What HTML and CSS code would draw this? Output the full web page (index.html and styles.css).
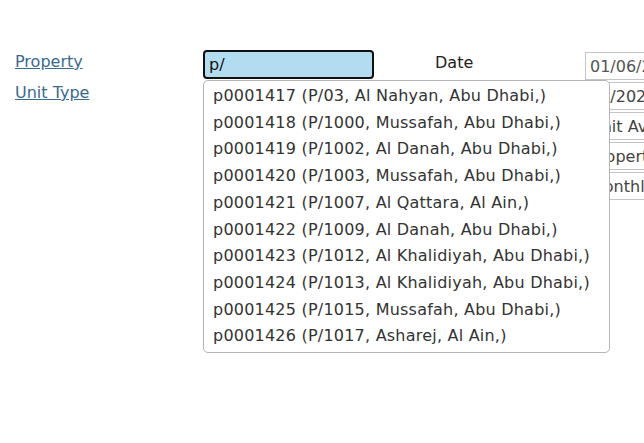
FILE: index.html
```html
<!DOCTYPE html>
<html lang="en">
<head>
  <meta charset="UTF-8">
  <meta name="viewport" content="width=device-width, initial-scale=1.0">
  <title>Property Search</title>
  <link rel="stylesheet" href="styles.css">
</head>
<body>
  <div class="page">
    <div class="form">
      <div class="labels">
        <a href="#" class="label-link">Property</a>
        <a href="#" class="label-link">Unit Type</a>
      </div>
      <div class="search">
        <input type="text" class="search-input" value="p/">
        <ul class="suggest">
          <li>p0001417 (P/03, Al Nahyan, Abu Dhabi,)</li>
          <li>p0001418 (P/1000, Mussafah, Abu Dhabi,)</li>
          <li>p0001419 (P/1002, Al Danah, Abu Dhabi,)</li>
          <li>p0001420 (P/1003, Mussafah, Abu Dhabi,)</li>
          <li>p0001421 (P/1007, Al Qattara, Al Ain,)</li>
          <li>p0001422 (P/1009, Al Danah, Abu Dhabi,)</li>
          <li>p0001423 (P/1012, Al Khalidiyah, Abu Dhabi,)</li>
          <li>p0001424 (P/1013, Al Khalidiyah, Abu Dhabi,)</li>
          <li>p0001425 (P/1015, Mussafah, Abu Dhabi,)</li>
          <li>p0001426 (P/1017, Asharej, Al Ain,)</li>
        </ul>
      </div>
      <div class="date-label">Date</div>
      <div class="fields">
        <input type="text" class="field field-date" value="01/06/2024">
        <input type="text" class="field" value="06/2024">
        <input type="text" class="field" value="Unit Available">
        <input type="text" class="field" value="Property">
        <input type="text" class="field" value="Monthly">
      </div>
    </div>
  </div>
</body>
</html>
```

FILE: styles.css
```css
* { box-sizing: border-box; margin: 0; padding: 0; }
body {
  font-family: 'DejaVu Sans', Verdana, sans-serif;
  font-size: 16px;
  background: #fff;
  color: #222;
}
.page {
  height: 100vh;
  overflow: hidden;
}
.form {
  display: flex;
  align-items: flex-start;
  padding: 50px 0 0 15px;
  width: 760px;
}
.labels {
  display: flex;
  flex-direction: column;
  gap: 12px;
  width: 188px;
  padding-top: 2px;
}
.label-link {
  color: #3a6a8e;
  line-height: 19px;
}
.search {
  position: relative;
  width: 171px;
}
.search-input {
  display: block;
  width: 171px;
  height: 29px;
  border: 2.5px solid #111;
  border-radius: 4px;
  background: #b4dcf1;
  font: inherit;
  color: #111;
  padding: 0 4px;
  outline: none;
}
.suggest {
  position: absolute;
  top: 30px;
  left: 0;
  width: 407px;
  list-style: none;
  background: #fff;
  border: 1px solid #b5b5b5;
  border-radius: 5px;
  padding: 2px 0;
  z-index: 2;
}
.suggest li {
  padding: 0 9px;
  letter-spacing: 0.22px;
  line-height: 26.7px;
  color: #333;
  white-space: nowrap;
}
.date-label {
  width: 211px;
  padding: 3px 0 0 61px;
  color: #222;
}
.fields {
  display: flex;
  flex-direction: column;
  gap: 2px;
  padding-top: 2px;
}
.field {
  width: 170px;
  height: 28px;
  border: 1px solid #c4c4c4;
  font: inherit;
  color: #444;
  padding: 0 4px;
  background: #fff;
}
.field-date { color: #555; }
```
